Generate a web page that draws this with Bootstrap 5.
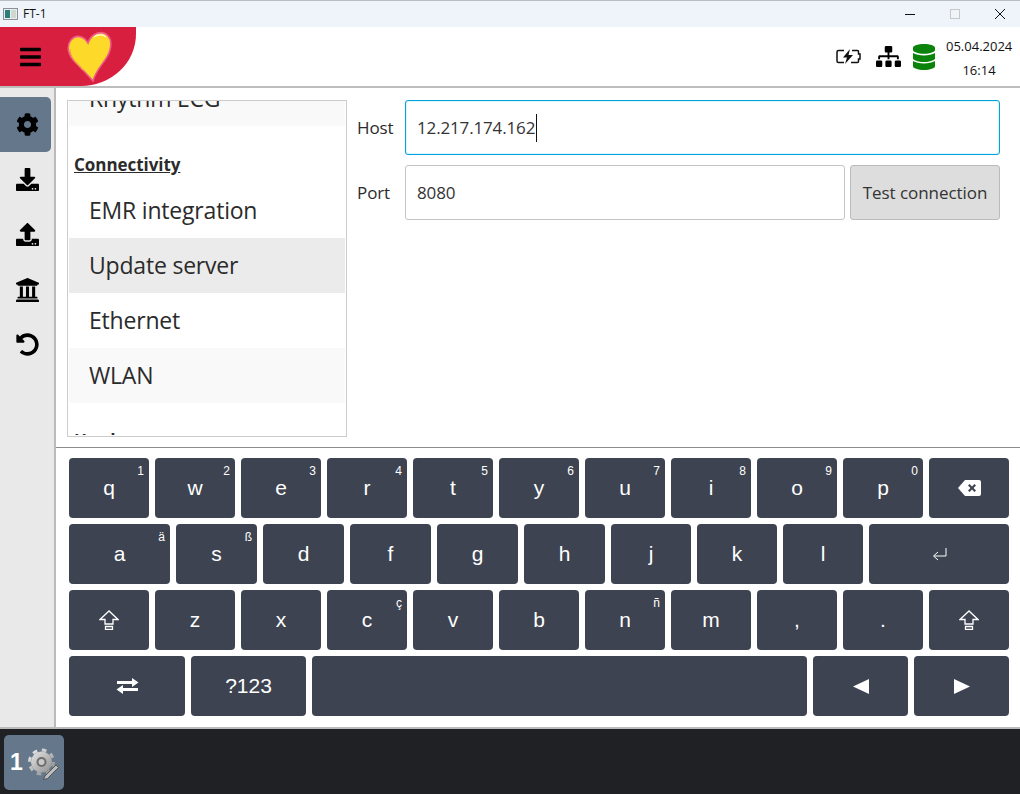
<!DOCTYPE html>
<html lang="en">
<head>
  <meta charset="UTF-8" />
  <meta name="viewport" content="width=device-width, initial-scale=1.0" />
  <title>FT-1</title>
  <link href="https://cdn.jsdelivr.net/npm/bootstrap@5.3.0/dist/css/bootstrap.min.css" rel="stylesheet" />
  <style>
    html, body { height: 794px; overflow: hidden; }
    body { font-family: "Open Sans", "Noto Sans", sans-serif; color: #2b2b2b; background: #fff; }
    .app-window { height: 794px; }

    .title-bar { height: 27px; background: #eff3fa; border-top: 1px solid #b9bcc0; font-size: 12px; color: #111; }
    .title-icon { width: 15px; height: 12px; margin: 0 5px 0 3px; }
    .win-group { margin-right: -2px; }
    .win-btn { width: 45px; }

    .top-bar { height: 61px; border-bottom: 2px solid #bdbdbd; }
    .brand-shape { width: 136px; height: 59px; background: #d91f3f; border-bottom-right-radius: 55px 52px; }
    .menu-icon { width: 21px; height: 24px; margin: 18px 0 0 20px; }
    .heart-logo { width: 46px; height: 52px; margin-left: 25px; margin-top: 3px; }
    .battery-icon { margin-right: 15px; }
    .network-icon { margin-right: 12px; }
    .clock-box { width: 66px; margin: 0 8px 0 11px; padding-top: 3px; font-size: 13px; line-height: 24px; color: #111; white-space: nowrap; }

    .main-row { border-bottom: 2px solid #bbb; }
    .side-bar { width: 56px; background: #e9e9e9; border-right: 2px solid #bbb; padding-top: 9px; }
    .side-btn { width: 51px; height: 55px; padding-left: 3px; color: #111; }
    .side-btn.is-on { background: #64778b; border-radius: 0 5px 5px 0; }
    .side-btn svg { width: 23px; height: 23px; }
    .side-btn svg.bank-icon { height: 24px; }

    .settings-pane { height: 359px; padding: 12px 20px 10px 11px; }
    .menu-box { width: 280px; height: 337px; border: 1px solid #ccc; padding: 0 1px 1px; }
    .menu-scroll { height: 100%; overflow: hidden; }
    .menu-row { height: 55px; padding-left: 20px; font-size: 23px; line-height: 55px; letter-spacing: -.2px; flex: none; }
    .menu-row.is-first { margin-top: -30px; background: #f9f9f9; }
    .menu-row.is-odd { background: #f9f9f9; }
    .menu-row.is-on { background: #ebebeb; }
    .menu-head { padding-left: 5px; font-size: 17px; font-weight: 700; text-decoration: underline; letter-spacing: -.05px; flex: none; }
    .menu-head.is-sec { height: 57px; padding-top: 27px; line-height: 24px; }
    .menu-head.is-next { margin-top: 26px; line-height: 24px; }

    .form-pane { margin-left: 10px; gap: 10px; }
    .field-label { width: 48px; font-size: 17px; letter-spacing: -.1px; }
    .field-box { height: 55px; border-radius: 3px; border: 1px solid #c4c4c4; padding: 0 11px; font-size: 17px; letter-spacing: -.15px; color: #333; }
    .field-box.is-focus { border-color: #00a2d9; box-shadow: inset 0 0 2px #8fdcf5; }
    .text-caret { width: 1px; height: 28px; background: #111; margin-left: 1px; }
    .port-box { margin-right: 5px; }
    .test-btn { width: 150px; height: 55px; flex: none; background: #ddd; border: 1px solid #bbb; border-radius: 3px; font-size: 17px; letter-spacing: -.05px; color: #333; padding: 0; }

    .keyboard-pane { flex: 1; border-top: 1px solid #8c8c8c; padding: 10px 11px 0 13px; }
    .key-row { height: 60px; gap: 6px; margin-bottom: 6px; }
    .key-cap { height: 60px; flex: none; background: #3d4351; border-radius: 4px; color: #fff; font-family: "Liberation Sans", Arial, sans-serif; font-size: 21px; position: relative; }
    .key-alt { position: absolute; top: 6px; right: 5px; font-size: 12px; line-height: 14px; }
    .w-80 { width: 80px; }
    .w-81 { width: 81px; }
    .w-101 { width: 101px; }
    .w-140 { width: 140px; }
    .w-116 { width: 116px; }
    .w-115 { width: 115px; }
    .w-495 { width: 495px; }
    .w-95 { width: 95px; }

    .task-bar { height: 65px; flex: none; background: #1f2124; padding: 6px 0 0 4px; }
    .task-btn { width: 60px; height: 55px; background: #64778b; border-radius: 5px; color: #fff; font-family: "Liberation Sans", Arial, sans-serif; font-weight: 700; font-size: 23px; padding-left: 6px; }
    .task-btn svg { width: 33px; height: 36px; margin-left: 4px; }
  </style>
</head>
<body>
  <div class="app-window d-flex flex-column">
    <div class="title-bar d-flex align-items-center flex-shrink-0">
      <svg class="title-icon" viewBox="0 0 15 12"><rect x=".5" y=".5" width="14" height="11" fill="#e8eef0" stroke="#8a9298"/><rect x="2" y="2" width="5" height="8" fill="#2f7d7a"/><rect x="8" y="2" width="5" height="8" fill="#cfd8d0"/></svg>
      <span>FT-1</span>
      <div class="ms-auto d-flex win-group">
        <div class="win-btn d-flex justify-content-center"><svg width="12" height="12" viewBox="0 0 12 12"><path d="M1 6.500h10" stroke="#111"/></svg></div>
        <div class="win-btn d-flex justify-content-center"><svg width="12" height="12" viewBox="0 0 12 12"><rect x="1.500" y="1.500" width="9" height="9" fill="none" stroke="#c8c8c8"/></svg></div>
        <div class="win-btn d-flex justify-content-center"><svg width="12" height="12" viewBox="0 0 12 12"><path d="M1 1l10 10M11 1L1 11" stroke="#111"/></svg></div>
      </div>
    </div>

    <div class="top-bar d-flex align-items-start flex-shrink-0">
      <div class="brand-shape d-flex align-items-start">
        <svg class="menu-icon" viewBox="0 0 448 512"><path d="M16 132h416c8.837 0 16-7.163 16-16V76c0-8.837-7.163-16-16-16H16C7.163 60 0 67.163 0 76v40c0 8.837 7.163 16 16 16zm0 160h416c8.837 0 16-7.163 16-16v-40c0-8.837-7.163-16-16-16H16c-8.837 0-16 7.163-16 16v40c0 8.837 7.163 16 16 16zm0 160h416c8.837 0 16-7.163 16-16v-40c0-8.837-7.163-16-16-16H16c-8.837 0-16 7.163-16 16v40c0 8.837 7.163 16 16 16z"/></svg>
        <svg class="heart-logo" viewBox="-1 -1 46 52"><path d="M21 12C17 5 9 3 4 9C-1 15 1 24 8 31C14 37 20 43 26 50C28 42 33 36 38 29C44 21 46 10 41 5C36-1 25 1 21 12Z" fill="#fdd92a" stroke="#ee5a8a" stroke-width="1.6"/><path d="M3 18C3 26 10 33 16 39" fill="none" stroke="#f7a43a"/><path d="M27 6C31 3 36 3 39 6" fill="none" stroke="#fff6c0" stroke-width="1.4"/></svg>
      </div>
      <div class="ms-auto d-flex align-items-center h-100">
        <svg width="25" height="15" viewBox="0 0 25 15" class="battery-icon"><path d="M8 1.500H2.500a1.500 1.500 0 0 0-1.500 1.500v9a1.500 1.500 0 0 0 1.500 1.500H8M16 1.500h5.500a1 1 0 0 1 1 1v2.500H24v5h-1.500v2.500a1 1 0 0 1-1 1H15" fill="none" stroke="#111" stroke-width="1.500"/><path d="M14 0L7 8.500h4L9 15l8-9h-4.500z" fill="#111"/></svg>
        <svg width="25" height="21" viewBox="0 0 640 512" class="network-icon" preserveAspectRatio="none"><path d="M128 352H32c-17.670 0-32 14.330-32 32v96c0 17.670 14.330 32 32 32h96c17.670 0 32-14.330 32-32v-96c0-17.670-14.330-32-32-32zm-24-80h192v48h48v-48h192v48h48v-57.590c0-21.170-17.230-38.410-38.410-38.410H344v-64h40c17.670 0 32-14.330 32-32V32c0-17.670-14.330-32-32-32H256c-17.670 0-32 14.330-32 32v96c0 17.670 14.330 32 32 32h40v64H94.410C73.230 224 56 241.230 56 262.410V320h48v-48zm264 80h-96c-17.670 0-32 14.330-32 32v96c0 17.670 14.330 32 32 32h96c17.670 0 32-14.330 32-32v-96c0-17.670-14.330-32-32-32zm240 0h-96c-17.670 0-32 14.330-32 32v96c0 17.670 14.330 32 32 32h96c17.670 0 32-14.330 32-32v-96c0-17.670-14.330-32-32-32z"/></svg>
        <svg width="22" height="26" viewBox="0 0 448 512" preserveAspectRatio="none"><path fill="#0a830a" d="M448 73.143v45.714C448 159.143 347.667 192 224 192S0 159.143 0 118.857V73.143C0 32.857 100.333 0 224 0s224 32.857 224 73.143zM448 176v102.857C448 319.143 347.667 352 224 352S0 319.143 0 278.857V176c48.125 33.143 136.208 48.572 224 48.572S399.874 209.143 448 176zm0 160v102.857C448 479.143 347.667 512 224 512S0 479.143 0 438.857V336c48.125 33.143 136.208 48.572 224 48.572S399.874 369.143 448 336z"/></svg>
        <div class="clock-box text-center"><div>05.04.2024</div><div>16:14</div></div>
      </div>
    </div>

    <div class="main-row d-flex flex-grow-1">
      <div class="side-bar flex-shrink-0">
        <div class="side-btn is-on d-flex align-items-center justify-content-center"><svg viewBox="0 0 512 512"><path d="M487.400 315.700l-42.600-24.600c4.300-23.200 4.300-47 0-70.200l42.600-24.600c4.900-2.800 7.100-8.600 5.500-14-11.100-35.600-30-67.800-54.700-94.600-3.800-4.100-10-5.100-14.800-2.300L380.800 110c-17.900-15.400-38.500-27.300-60.800-35.100V25.800c0-5.600-3.900-10.500-9.400-11.700-36.700-8.200-74.300-7.800-109.200 0-5.500 1.200-9.400 6.100-9.400 11.700V75c-22.200 7.900-42.800 19.800-60.800 35.100L88.700 85.500c-4.900-2.800-11-1.900-14.800 2.300-24.700 26.700-43.600 58.900-54.700 94.600-1.700 5.400.6 11.200 5.500 14L67.300 221c-4.300 23.200-4.300 47 0 70.200l-42.600 24.600c-4.900 2.800-7.100 8.600-5.500 14 11.100 35.600 30 67.800 54.700 94.600 3.800 4.100 10 5.100 14.800 2.300l42.600-24.600c17.900 15.400 38.500 27.300 60.800 35.100v49.200c0 5.600 3.900 10.500 9.400 11.700 36.700 8.200 74.300 7.800 109.200 0 5.500-1.200 9.400-6.100 9.400-11.700v-49.200c22.200-7.900 42.800-19.800 60.800-35.100l42.600 24.600c4.900 2.800 11 1.900 14.800-2.300 24.700-26.700 43.600-58.900 54.700-94.600 1.500-5.500-.7-11.300-5.600-14.100zM256 336c-44.100 0-80-35.900-80-80s35.900-80 80-80 80 35.900 80 80-35.900 80-80 80z"/></svg></div>
        <div class="side-btn d-flex align-items-center justify-content-center"><svg viewBox="0 0 512 512"><path d="M216 0h80c13.300 0 24 10.700 24 24v168h87.700c17.800 0 26.700 21.500 14.100 34.100L269.700 378.300c-7.500 7.500-19.800 7.500-27.300 0L90.100 226.100c-12.600-12.600-3.700-34.100 14.100-34.100H192V24c0-13.300 10.700-24 24-24zm296 376v112c0 13.300-10.700 24-24 24H24c-13.300 0-24-10.700-24-24V376c0-13.300 10.700-24 24-24h146.700l49 49c20.100 20.100 52.500 20.100 72.600 0l49-49H488c13.300 0 24 10.700 24 24zm-124 88c0-11-9-20-20-20s-20 9-20 20 9 20 20 20 20-9 20-20zm64 0c0-11-9-20-20-20s-20 9-20 20 9 20 20 20 20-9 20-20z"/></svg></div>
        <div class="side-btn d-flex align-items-center justify-content-center"><svg viewBox="0 0 512 512"><path d="M296 384h-80c-13.300 0-24-10.700-24-24V192h-87.700c-17.800 0-26.700-21.500-14.100-34.100L242.300 5.700c7.500-7.500 19.800-7.500 27.300 0l152.200 152.200c12.600 12.600 3.700 34.100-14.100 34.100H320v168c0 13.300-10.700 24-24 24zm216-8v112c0 13.300-10.700 24-24 24H24c-13.300 0-24-10.700-24-24V376c0-13.300 10.700-24 24-24h136v8c0 30.900 25.100 56 56 56h80c30.900 0 56-25.100 56-56v-8h136c13.300 0 24 10.700 24 24zm-124 88c0-11-9-20-20-20s-20 9-20 20 9 20 20 20 20-9 20-20zm64 0c0-11-9-20-20-20s-20 9-20 20 9 20 20 20 20-9 20-20z"/></svg></div>
        <div class="side-btn d-flex align-items-center justify-content-center"><svg class="bank-icon" viewBox="16 32 480 448" preserveAspectRatio="none"><path d="M496 128v16a8 8 0 0 1-8 8h-24v12c0 6.627-5.373 12-12 12H60c-6.627 0-12-5.373-12-12v-12H24a8 8 0 0 1-8-8v-16a8 8 0 0 1 4.941-7.392l232-88a7.996 7.996 0 0 1 6.118 0l232 88A8 8 0 0 1 496 128zm-24 304H40c-13.255 0-24 10.745-24 24v16a8 8 0 0 0 8 8h464a8 8 0 0 0 8-8v-16c0-13.255-10.745-24-24-24zM96 192v192H60c-6.627 0-12 5.373-12 12v20h416v-20c0-6.627-5.373-12-12-12h-36V192h-64v192h-64V192h-64v192h-64V192H96z"/></svg></div>
        <div class="side-btn d-flex align-items-center justify-content-center"><svg viewBox="0 0 512 512"><path d="M255.545 8c-66.269.119-126.438 26.233-170.860 68.685L48.971 40.971C33.851 25.851 8 36.559 8 57.941V192c0 13.255 10.745 24 24 24h134.059c21.382 0 32.090-25.851 16.971-40.971l-41.750-41.750c30.864-28.899 70.801-44.907 113.230-45.273 92.398-.798 170.283 73.977 169.484 169.442C423.236 348.009 349.816 424 256 424c-41.127 0-79.997-14.678-110.630-41.556-4.743-4.161-11.906-3.908-16.368.553L89.340 422.659c-4.872 4.872-4.631 12.815.482 17.433C133.798 479.813 192.074 504 256 504c136.966 0 247.999-111.033 248-247.998C504.001 119.193 392.354 7.755 255.545 8z"/></svg></div>
      </div>

      <div class="flex-grow-1 d-flex flex-column">
        <div class="settings-pane d-flex flex-shrink-0">
          <div class="menu-box flex-shrink-0">
            <div class="menu-scroll d-flex flex-column">
              <div class="menu-row is-first">Rhythm ECG</div>
              <div class="menu-head is-sec">Connectivity</div>
              <div class="menu-row">EMR integration</div>
              <div class="menu-row is-on">Update server</div>
              <div class="menu-row">Ethernet</div>
              <div class="menu-row is-odd">WLAN</div>
              <div class="menu-head is-next">Hardware</div>
            </div>
          </div>
          <div class="flex-grow-1 form-pane d-flex flex-column">
            <div class="d-flex align-items-center">
              <div class="field-label flex-shrink-0">Host</div>
              <div class="field-box is-focus flex-grow-1 d-flex align-items-center">12.217.174.162<span class="text-caret"></span></div>
            </div>
            <div class="d-flex align-items-center">
              <div class="field-label flex-shrink-0">Port</div>
              <div class="field-box port-box flex-grow-1 d-flex align-items-center">8080</div>
              <button type="button" class="btn test-btn">Test connection</button>
            </div>
          </div>
        </div>

        <div class="keyboard-pane">
          <div class="key-row d-flex">
            <div class="key-cap w-80 d-flex align-items-center justify-content-center">q<span class="key-alt">1</span></div>
            <div class="key-cap w-80 d-flex align-items-center justify-content-center">w<span class="key-alt">2</span></div>
            <div class="key-cap w-80 d-flex align-items-center justify-content-center">e<span class="key-alt">3</span></div>
            <div class="key-cap w-80 d-flex align-items-center justify-content-center">r<span class="key-alt">4</span></div>
            <div class="key-cap w-80 d-flex align-items-center justify-content-center">t<span class="key-alt">5</span></div>
            <div class="key-cap w-80 d-flex align-items-center justify-content-center">y<span class="key-alt">6</span></div>
            <div class="key-cap w-80 d-flex align-items-center justify-content-center">u<span class="key-alt">7</span></div>
            <div class="key-cap w-80 d-flex align-items-center justify-content-center">i<span class="key-alt">8</span></div>
            <div class="key-cap w-80 d-flex align-items-center justify-content-center">o<span class="key-alt">9</span></div>
            <div class="key-cap w-80 d-flex align-items-center justify-content-center">p<span class="key-alt">0</span></div>
            <div class="key-cap w-80 d-flex align-items-center justify-content-center"><svg width="23" height="16" viewBox="0 0 23 16"><path fill="#fff" fill-rule="evenodd" d="M7 0h14a2 2 0 0 1 2 2v12a2 2 0 0 1-2 2H7L0 8zm4.500 4L10 5.500 12.500 8 10 10.500 11.500 12 14 9.500 16.500 12 18 10.500 15.500 8 18 5.500 16.500 4 14 6.500z"/></svg></div>
          </div>
          <div class="key-row d-flex">
            <div class="key-cap w-101 d-flex align-items-center justify-content-center">a<span class="key-alt">ä</span></div>
            <div class="key-cap w-81 d-flex align-items-center justify-content-center">s<span class="key-alt">ß</span></div>
            <div class="key-cap w-81 d-flex align-items-center justify-content-center">d</div>
            <div class="key-cap w-81 d-flex align-items-center justify-content-center">f</div>
            <div class="key-cap w-81 d-flex align-items-center justify-content-center">g</div>
            <div class="key-cap w-81 d-flex align-items-center justify-content-center">h</div>
            <div class="key-cap w-80 d-flex align-items-center justify-content-center">j</div>
            <div class="key-cap w-80 d-flex align-items-center justify-content-center">k</div>
            <div class="key-cap w-80 d-flex align-items-center justify-content-center">l</div>
            <div class="key-cap w-140 d-flex align-items-center justify-content-center"><svg width="15" height="14" viewBox="0 0 15 14"><path d="M14 1v8H2M6 5L1.500 9 6 13" fill="none" stroke="#fff"/></svg></div>
          </div>
          <div class="key-row d-flex">
            <div class="key-cap w-80 d-flex align-items-center justify-content-center"><svg width="20" height="20" viewBox="0 0 20 20"><path d="M10 1L1 9.500h5v4.500h8V9.500h5zM6.500 16.500h7v3h-7z" fill="none" stroke="#fff" stroke-width="1.300"/></svg></div>
            <div class="key-cap w-80 d-flex align-items-center justify-content-center">z</div>
            <div class="key-cap w-80 d-flex align-items-center justify-content-center">x</div>
            <div class="key-cap w-80 d-flex align-items-center justify-content-center">c<span class="key-alt">ç</span></div>
            <div class="key-cap w-80 d-flex align-items-center justify-content-center">v</div>
            <div class="key-cap w-80 d-flex align-items-center justify-content-center">b</div>
            <div class="key-cap w-80 d-flex align-items-center justify-content-center">n<span class="key-alt">ñ</span></div>
            <div class="key-cap w-80 d-flex align-items-center justify-content-center">m</div>
            <div class="key-cap w-80 d-flex align-items-center justify-content-center">,</div>
            <div class="key-cap w-80 d-flex align-items-center justify-content-center">.</div>
            <div class="key-cap w-80 d-flex align-items-center justify-content-center"><svg width="20" height="20" viewBox="0 0 20 20"><path d="M10 1L1 9.500h5v4.500h8V9.500h5zM6.500 16.500h7v3h-7z" fill="none" stroke="#fff" stroke-width="1.300"/></svg></div>
          </div>
          <div class="key-row d-flex">
            <div class="key-cap w-116 d-flex align-items-center justify-content-center"><svg width="23" height="16" viewBox="0 0 23 16"><path fill="#fff" d="M16 0l6.500 4.500L16 9V6H1V3h15zM7 7v3h15v3H7v3L.500 11.500z"/></svg></div>
            <div class="key-cap w-115 d-flex align-items-center justify-content-center">?123</div>
            <div class="key-cap w-495"></div>
            <div class="key-cap w-95 d-flex align-items-center justify-content-center"><svg width="16" height="15" viewBox="0 0 16 15"><path fill="#fff" d="M16 0v15L0 7.500z"/></svg></div>
            <div class="key-cap w-95 d-flex align-items-center justify-content-center"><svg width="16" height="15" viewBox="0 0 16 15"><path fill="#fff" d="M0 0v15l16-7.500z"/></svg></div>
          </div>
        </div>
      </div>
    </div>

    <div class="task-bar">
      <div class="task-btn d-flex align-items-center">
        <span>1</span>
        <svg viewBox="0 0 33 36">
          <defs><linearGradient id="gearFill" gradientUnits="userSpaceOnUse" x1="2" y1="3" x2="27" y2="30"><stop offset="0" stop-color="#f0f0f0"/><stop offset="1" stop-color="#868686"/></linearGradient></defs>
          <circle cx="14.500" cy="17" r="10.500" fill="url(#gearFill)"/>
          <circle cx="14.500" cy="17" r="12" fill="none" stroke="url(#gearFill)" stroke-width="3" stroke-dasharray="4.700 4.725"/>
          <circle cx="14.500" cy="17" r="5" fill="#6d6d6d"/>
          <circle cx="14.500" cy="17" r="3" fill="#c9c9c9"/>
          <path d="M18 31l11-11 2.500 2.500-11 11-4 1z" fill="#bdbdbd" stroke="#444" stroke-width=".8"/>
        </svg>
      </div>
    </div>
  </div>
  <script src="https://cdn.jsdelivr.net/npm/bootstrap@5.3.0/dist/js/bootstrap.bundle.min.js"></script>
</body>
</html>
